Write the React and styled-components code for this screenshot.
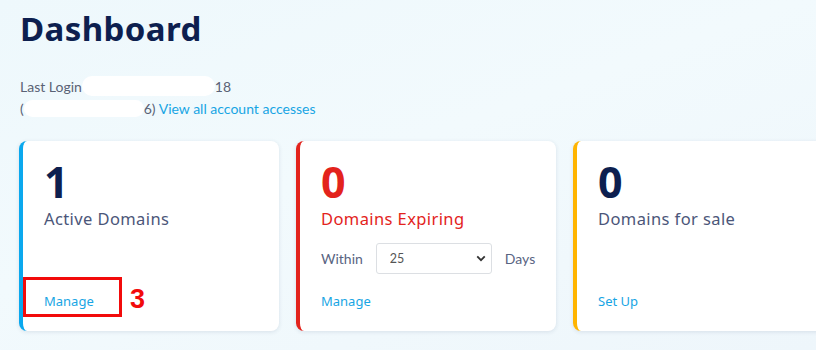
import React, { useState } from 'react';
import styled, { createGlobalStyle } from 'styled-components';

const GlobalStyle = createGlobalStyle`
  html, body {
    margin: 0;
    padding: 0;
  }
  body {
    background: linear-gradient(160deg, #eef8fc 0%, #f2fafd 45%, #eef6fb 100%);
    font-family: "Noto Sans", "Open Sans", sans-serif;
    overflow: hidden;
  }
`;

const Page = styled.div`
  width: 816px;
  height: 350px;
  padding: 0 0 0 19px;
  box-sizing: border-box;
  overflow: hidden;
`;

const Title = styled.h1`
  margin: 0;
  padding: 6px 0 0 1px;
  font-family: "Noto Sans", sans-serif;
  font-size: 33px;
  font-weight: 700;
  line-height: 46px;
  letter-spacing: 0.4px;
  color: #0d1f4f;
`;

const LoginInfo = styled.div`
  margin-top: 24px;
  padding-left: 1px;
  font-family: Lato, sans-serif;
  font-size: 14px;
  line-height: 22px;
  color: #5a6275;
`;

const Masked = styled.span`
  display: inline-block;
  vertical-align: middle;
  width: ${(p) => p.w}px;
  height: ${(p) => p.h}px;
  margin: -4px 0 0 0;
  background: #ffffff;
  border-radius: 10px;
`;

const Link = styled.a`
  color: #18a5e4;
  text-decoration: none;
  cursor: pointer;
`;

const Cards = styled.div`
  display: flex;
  gap: 17px;
  margin-top: 21px;
`;

const Card = styled.div`
  flex: 0 0 260px;
  height: 190px;
  box-sizing: border-box;
  display: flex;
  flex-direction: column;
  padding: 18px 20px 20px 21px;
  background: #ffffff;
  border-left: 4px solid ${(p) => p.accent};
  border-radius: 8px;
  box-shadow: 0 1px 4px rgba(30, 60, 100, 0.12);
`;

const Count = styled.div`
  font-family: "Noto Sans", sans-serif;
  font-size: 43px;
  font-weight: 700;
  line-height: 46px;
  color: ${(p) => p.color || '#0d1f4f'};
`;

const Label = styled.div`
  margin-top: 3px;
  font-family: "Noto Sans", sans-serif;
  font-size: 16.5px;
  letter-spacing: 0.4px;
  line-height: 22px;
  color: ${(p) => p.color || '#4b5679'};
`;

const FilterRow = styled.div`
  display: flex;
  align-items: center;
  margin-top: 13px;
  font-family: Lato, sans-serif;
  font-size: 14px;
  color: #596482;
`;

const Select = styled.select`
  width: 116px;
  height: 31px;
  margin: 0 13px 0 13px;
  padding: 0 8px 0 13px;
  font-family: Lato, sans-serif;
  font-size: 12.5px;
  color: #555;
  background: #fff;
  border: 1px solid #dcdfe3;
  border-radius: 3px;
  appearance: none;
  background-image: url("data:image/svg+xml,%3Csvg xmlns='http://www.w3.org/2000/svg' width='12' height='8' viewBox='0 0 12 8'%3E%3Cpath d='M1.5 1.5 6 6l4.5-4.5' fill='none' stroke='%23333' stroke-width='2.2'/%3E%3C/svg%3E");
  background-repeat: no-repeat;
  background-position: right 5px center;
  background-size: 10px 7px;
`;

const Footer = styled.div`
  margin-top: auto;
  display: flex;
  align-items: center;
  line-height: 20px;
`;

const Action = styled(Link)`
  font-family: "Noto Sans", sans-serif;
  font-size: 13px;
`;

const Highlight = styled.span`
  position: relative;
  display: inline-flex;
  align-items: center;
`;

const Marker = styled.span`
  position: absolute;
  left: -21px;
  top: -14px;
  width: 99px;
  height: 40px;
  box-sizing: border-box;
  border: 3px solid #f20b0b;
`;

const Badge = styled.span`
  position: absolute;
  left: 86px;
  top: -5px;
  font-family: "Liberation Sans", Arial, sans-serif;
  font-size: 27px;
  font-weight: 700;
  line-height: 27px;
  color: #f20b0b;
`;

export default function App() {
  const [days, setDays] = useState('25');

  return (
    <Page>
      <GlobalStyle />
      <Title>Dashboard</Title>
      <LoginInfo>
        Last Login<Masked w={133} h={20} />18
        <br />(<Masked w={120} h={17} />6) <Link>View all account accesses</Link>
      </LoginInfo>
      <Cards>
        <Card accent="#0aa8ee">
          <Count>1</Count>
          <Label>Active Domains</Label>
          <Footer>
            <Highlight>
              <Marker />
              <Action>Manage</Action>
              <Badge>3</Badge>
            </Highlight>
          </Footer>
        </Card>
        <Card accent="#e3231c">
          <Count color="#e3231c">0</Count>
          <Label color="#e3231c">Domains Expiring</Label>
          <FilterRow>
            Within
            <Select value={days} onChange={(e) => setDays(e.target.value)}>
              <option value="25">25</option>
              <option value="30">30</option>
              <option value="60">60</option>
              <option value="90">90</option>
            </Select>
            Days
          </FilterRow>
          <Footer>
            <Action>Manage</Action>
          </Footer>
        </Card>
        <Card accent="#ffb400">
          <Count>0</Count>
          <Label>Domains for sale</Label>
          <Footer>
            <Action>Set Up</Action>
          </Footer>
        </Card>
      </Cards>
    </Page>
  );
}
